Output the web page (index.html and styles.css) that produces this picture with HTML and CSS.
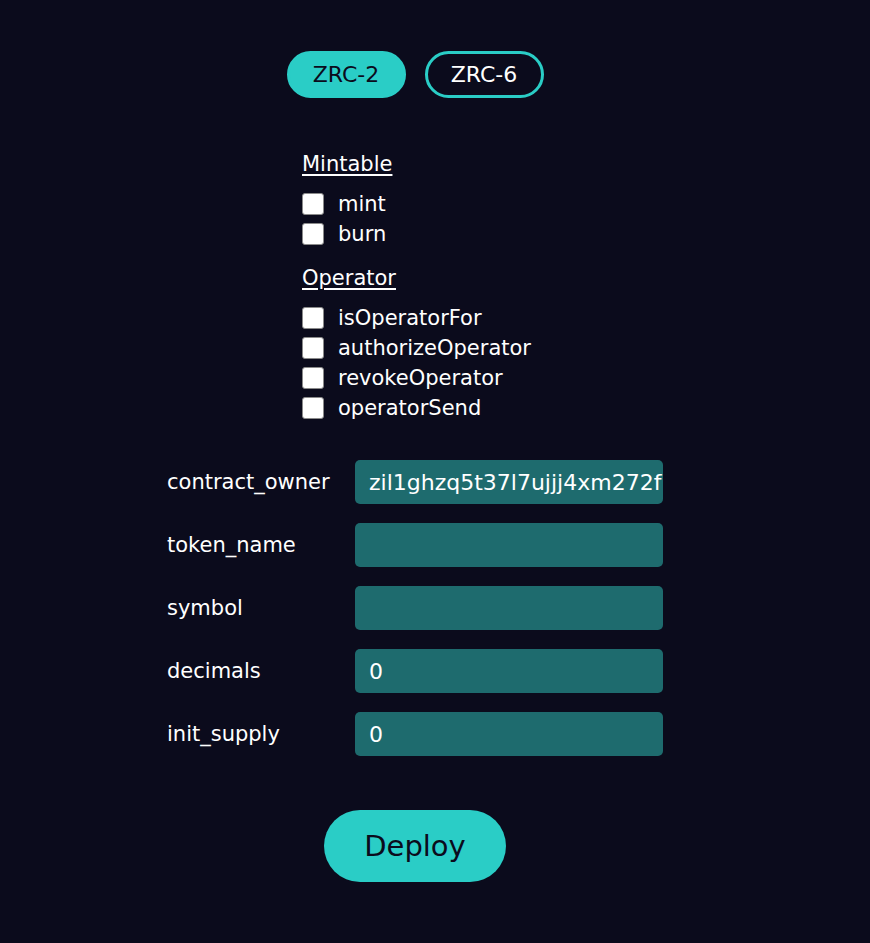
FILE: index.html
```html
<!DOCTYPE html>
<html>
<head>
<meta charset="utf-8">
<link rel="stylesheet" href="styles.css">
</head>
<body>
<div class="page">
  <div class="tabs">
    <button class="tab active">ZRC-2</button>
    <button class="tab">ZRC-6</button>
  </div>
  <div class="options">
    <div class="group-title">Mintable</div>
    <div class="checks">
      <label class="check"><span class="box"></span>mint</label>
      <label class="check"><span class="box"></span>burn</label>
    </div>
    <div class="group-title">Operator</div>
    <div class="checks">
      <label class="check"><span class="box"></span>isOperatorFor</label>
      <label class="check"><span class="box"></span>authorizeOperator</label>
      <label class="check"><span class="box"></span>revokeOperator</label>
      <label class="check"><span class="box"></span>operatorSend</label>
    </div>
  </div>
  <div class="form">
    <div class="row"><span class="label">contract_owner</span><div class="input">zil1ghzq5t37l7ujjj4xm272f</div></div>
    <div class="row"><span class="label">token_name</span><div class="input"></div></div>
    <div class="row"><span class="label">symbol</span><div class="input"></div></div>
    <div class="row"><span class="label">decimals</span><div class="input">0</div></div>
    <div class="row"><span class="label">init_supply</span><div class="input">0</div></div>
  </div>
  <div class="actions">
    <button class="deploy">Deploy</button>
  </div>
</div>
</body>
</html>
```
FILE: styles.css
```css
html, body {
  margin: 0;
  padding: 0;
  background: #0b0b1c;
}
body {
  font-family: "DejaVu Sans", Verdana, sans-serif;
  color: #ffffff;
  height: 943px;
}
.page {
  width: 830px;
  display: flex;
  flex-direction: column;
  align-items: center;
  padding-top: 51px;
}
.tabs {
  display: flex;
  gap: 19px;
}
.tab {
  width: 119px;
  height: 47px;
  border-radius: 24px;
  border: 3px solid #2acdc6;
  background: transparent;
  color: #ffffff;
  font-family: inherit;
  font-size: 22px;
  padding: 0;
}
.tab.active {
  background: #2acdc6;
  color: #0b0b1c;
}
.options {
  width: 226px;
  margin-top: 54px;
  display: flex;
  flex-direction: column;
}
.group-title {
  font-size: 21px;
  text-decoration: underline;
  text-underline-offset: 3px;
  line-height: 24px;
  height: 24px;
  margin-bottom: 13px;
}
.checks {
  display: flex;
  flex-direction: column;
  margin-bottom: 17px;
}
.check {
  display: flex;
  align-items: center;
  height: 30px;
  font-size: 21px;
  white-space: nowrap;
}
.box {
  width: 20px;
  height: 20px;
  background: #ffffff;
  border: 1px solid #8a8a8a;
  border-radius: 3px;
  margin-right: 14px;
  flex: none;
}
.form {
  margin-top: 20px;
  display: flex;
  flex-direction: column;
  gap: 19px;
  width: 496px;
}
.row {
  display: flex;
  align-items: center;
  height: 44px;
}
.label {
  width: 188px;
  font-size: 21px;
}
.input {
  width: 308px;
  height: 44px;
  box-sizing: border-box;
  background: #1e6b6e;
  border-radius: 5px;
  padding: 0 14px;
  display: flex;
  align-items: center;
  font-size: 22px;
  overflow: hidden;
  white-space: nowrap;
}
.actions {
  margin-top: 54px;
}
.deploy {
  width: 182px;
  height: 72px;
  border-radius: 36px;
  border: none;
  background: #2acdc6;
  color: #0b0b1c;
  font-family: inherit;
  font-size: 29px;
  padding: 0;
}
```
